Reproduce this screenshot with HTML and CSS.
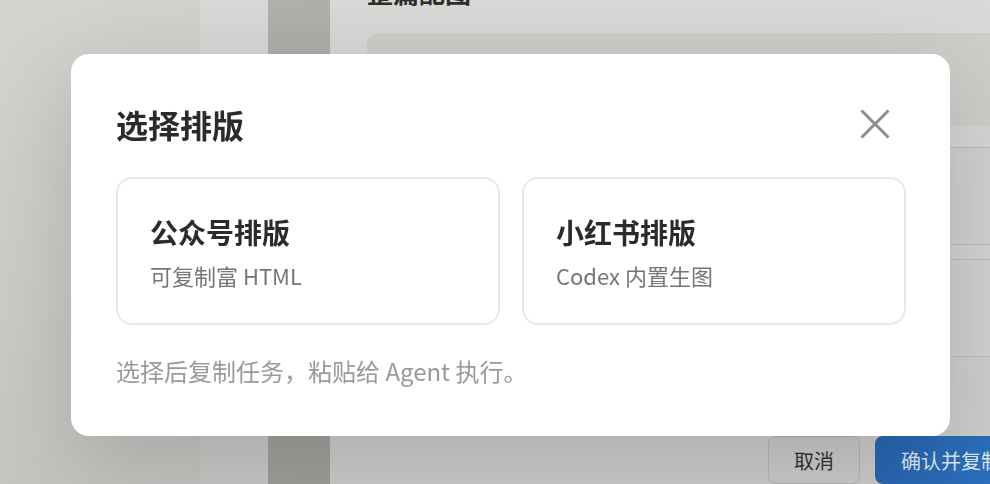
FILE: index.html
```html
<!DOCTYPE html>
<html lang="zh-CN">
<head>
<meta charset="utf-8">
<title>选择排版</title>
<link rel="stylesheet" href="styles.css">
</head>
<body>
<div class="page">
  <div class="side side-a"></div>
  <div class="side side-b"></div>
  <div class="side side-c"></div>
  <main class="main">
    <h2 class="main-title">整篇配图</h2>
    <div class="preview"></div>
    <div class="field field-1"></div>
    <div class="field field-2"></div>
    <div class="actions">
      <button class="btn btn-cancel">取消</button>
      <button class="btn btn-primary">确认并复制</button>
    </div>
  </main>
</div>

<div class="overlay">
  <section class="modal">
    <header class="modal-head">
      <h1 class="modal-title">选择排版</h1>
      <button class="close" aria-label="关闭">
        <svg width="30" height="30" viewBox="0 0 30 30"><path d="M1.5 1.5 L28.5 28.5 M28.5 1.5 L1.5 28.5" stroke="#8c8c8a" stroke-width="3" fill="none"/></svg>
      </button>
    </header>
    <div class="options">
      <div class="option">
        <div class="option-title">公众号排版</div>
        <div class="option-sub">可复制富 HTML</div>
      </div>
      <div class="option">
        <div class="option-title">小红书排版</div>
        <div class="option-sub">Codex 内置生图</div>
      </div>
    </div>
    <p class="hint">选择后复制任务，粘贴给 Agent 执行。</p>
  </section>
</div>
</body>
</html>
```

FILE: styles.css
```css
html, body {
  margin: 0;
  padding: 0;
  width: 990px;
  height: 484px;
  overflow: hidden;
  font-family: "Noto Sans CJK SC", "Noto Sans", sans-serif;
}

.page {
  display: flex;
  width: 990px;
  height: 484px;
  overflow: hidden;
}

.side { flex: 0 0 auto; height: 100%; }
.side-a {
  width: 200px;
  background: linear-gradient(160deg, #d4d5d1 0%, #cacbc7 60%, #c2c3bf 100%);
}
.side-b {
  width: 68px;
  background: linear-gradient(180deg, #d9d9d7 0%, #cfcfcd 60%, #c6c6c4 100%);
}
.side-c {
  width: 62px;
  background: linear-gradient(170deg, #b0b0ac 0%, #a5a5a1 60%, #9d9d99 100%);
}

.main {
  flex: 0 0 740px;
  box-sizing: border-box;
  padding: 0 37px;
  background: linear-gradient(180deg, #d9d9d7 0%, #d2d2d0 50%, #cacac8 100%);
  display: flex;
  flex-direction: column;
}

.main-title {
  margin: -25px 0 0;
  font-size: 26px;
  line-height: 34px;
  font-weight: 700;
  color: #2e2e2c;
}

.preview {
  margin-top: 24px;
  height: 94px;
  border-radius: 12px;
  background: #cdcdc9;
}

.field {
  box-sizing: border-box;
  border-top: 1px solid #bdbdbb;
  border-bottom: 1px solid #bdbdbb;
  background: #d0d0ce;
}
.field-1 { margin-top: 21px; height: 98px; }
.field-2 { margin-top: 14px; height: 99px; }

.actions {
  margin-top: 79px;
  display: flex;
  justify-content: flex-end;
  gap: 15px;
}

.btn {
  font-family: inherit;
  font-size: 20px;
  height: 48px;
  border-radius: 8px;
  padding: 0;
}
.btn-cancel {
  width: 92px;
  border: 1px solid #b1b1af;
  background: #c9c9c7;
  color: #333331;
}
.btn-primary {
  width: 158px;
  border: none;
  background: linear-gradient(90deg, #2866b0, #2d72c0);
  color: #dde7f2;
  text-align: left;
  padding-left: 26px;
}

.overlay {
  position: fixed;
  inset: 0;
  box-sizing: border-box;
  padding: 54px 40px 0 71px;
}

.modal {
  box-sizing: border-box;
  width: 879px;
  height: 382px;
  background: #ffffff;
  border-radius: 18px;
  padding: 48px 44px 0 45px;
  box-shadow: 0 24px 90px rgba(0, 0, 0, 0.16);
}

.modal-head {
  display: flex;
  align-items: center;
  justify-content: space-between;
  height: 44px;
}

.modal-title {
  margin: 0;
  font-size: 32px;
  line-height: 44px;
  font-weight: 700;
  color: #2b2b29;
}

.close {
  border: none;
  background: none;
  padding: 0;
  margin-right: 16px;
  width: 30px;
  height: 30px;
  display: flex;
}

.options {
  margin-top: 31px;
  display: grid;
  grid-template-columns: 1fr 1fr;
  gap: 22px;
}

.option {
  box-sizing: border-box;
  height: 148px;
  border: 2px solid #e8e8e6;
  border-radius: 16px;
  padding: 33px 32px 0;
}

.option-title {
  font-size: 28px;
  line-height: 40px;
  font-weight: 700;
  color: #2b2b29;
}

.option-sub {
  margin-top: 7px;
  font-size: 22px;
  line-height: 32px;
  color: #767674;
}

.hint {
  margin: 30px 0 0;
  font-size: 24px;
  line-height: 32px;
  color: #9a9a98;
}
```
